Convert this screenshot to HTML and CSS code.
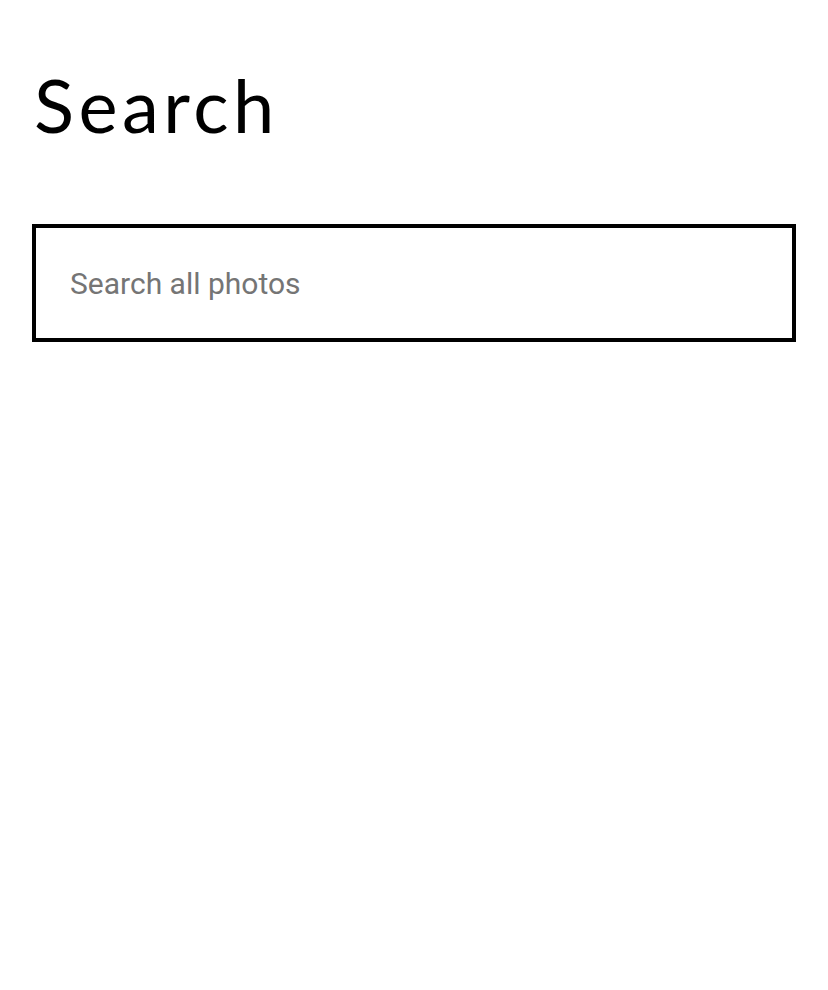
FILE: index.html
```html
<!DOCTYPE html>
<html>
<head>
<meta charset="utf-8">
<link rel="stylesheet" href="styles.css">
</head>
<body>
<main class="page">
  <h1 class="title">Search</h1>
  <input class="search" type="text" placeholder="Search all photos">
</main>
</body>
</html>
```

FILE: styles.css
```css
html, body {
  margin: 0;
  padding: 0;
  background: #fff;
}
.page {
  padding: 68px 32px 0 32px;
  display: flex;
  flex-direction: column;
}
.title {
  margin: 0;
  padding-left: 2px;
  font-family: "Lato", sans-serif;
  font-weight: 400;
  font-size: 74px;
  line-height: 74px;
  color: #000;
  letter-spacing: 4.5px;
}
.search {
  margin-top: 82px;
  box-sizing: border-box;
  width: 764px;
  height: 118px;
  border: 4px solid #000;
  padding: 0 34px;
  font-family: "Roboto", sans-serif;
  font-size: 30px;
  color: #000;
  outline: none;
  background: #fff;
}
.search::placeholder {
  color: #757575;
}
```
